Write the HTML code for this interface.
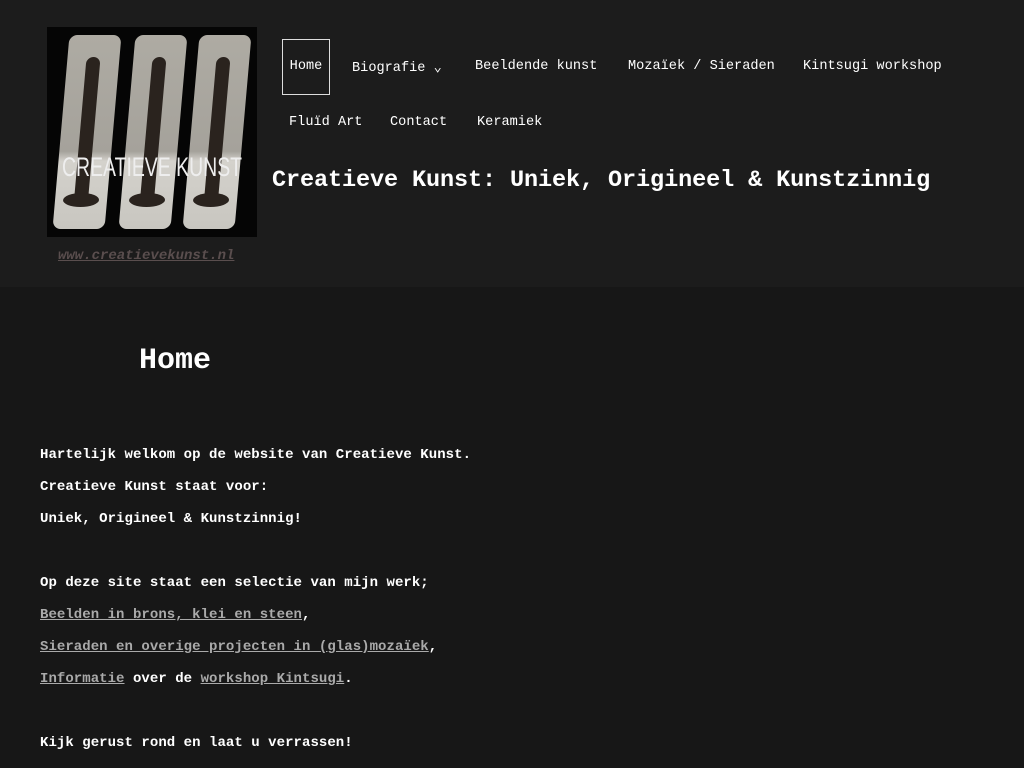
<!DOCTYPE html>
<html><head><meta charset="utf-8"><style>
body{margin:0;background:#171717;font-family:"Liberation Mono",monospace;color:#fff;width:1024px;height:768px;overflow:hidden;position:relative}
.hdr{position:absolute;left:0;top:0;width:1024px;height:287px;background:#1c1c1c}
.logo{position:absolute;left:47px;top:27px;width:210px;height:210px;background:#050505;overflow:hidden}
.p{position:absolute;top:8px;width:52px;height:194px;border-radius:8px;background:linear-gradient(#aeaba3 0%,#a5a29b 60%,#d4d2cc 65%,#c8c6c0 100%);transform:skewX(-5deg)}
.fig{position:absolute;left:19px;top:22px;width:14px;height:140px;background:#2a231e;border-radius:8px 8px 4px 4px}
.base{position:absolute;left:8px;top:158px;width:36px;height:14px;background:#2a231e;border-radius:50%}
.ck{position:absolute;left:-20px;top:125px;width:250px;text-align:center;white-space:nowrap;font-family:"Liberation Sans Narrow","Liberation Sans",sans-serif;font-size:27px;color:#eee;transform:scaleX(.72)}
.url{position:absolute;left:58px;top:248px;font-size:14px;font-weight:bold;font-style:italic;color:#5a4e4e;text-decoration:underline}
.nav a{position:absolute;font-size:13.6px;color:#fff;text-decoration:none}
.home{left:282px;top:39px;width:46px;height:54px;border:1px solid #ddd;line-height:54px;text-align:center}
.title{position:absolute;left:272px;top:167px;font-size:23.5px;font-weight:bold;letter-spacing:-.1px}
h1{position:absolute;left:139px;top:344px;margin:0;font-size:30px;font-weight:bold}
.c{position:absolute;left:40px;top:439px;font-size:14px;font-weight:bold;line-height:32px;letter-spacing:.05px}
.c a{color:#aaa;text-decoration:underline}
</style></head><body>
<div class="hdr"></div>
<div class="logo">
<div class="p" style="left:14px"><div class="fig"></div><div class="base"></div></div>
<div class="p" style="left:80px"><div class="fig"></div><div class="base"></div></div>
<div class="p" style="left:144px"><div class="fig"></div><div class="base"></div></div>
<div class="ck">CREATIEVE KUNST</div>
</div>
<div class="url">www.creatievekunst.nl</div>
<div class="nav">
<a class="home">Home</a>
<a style="left:352px;top:59px">Biografie ⌄</a>
<a style="left:475px;top:59px">Beeldende kunst</a>
<a style="left:628px;top:59px">Mozaïek / Sieraden</a>
<a style="left:803px;top:59px">Kintsugi workshop</a>
<a style="left:289px;top:115px">Fluïd Art</a>
<a style="left:390px;top:115px">Contact</a>
<a style="left:477px;top:115px">Keramiek</a>
</div>
<div class="title">Creatieve Kunst: Uniek, Origineel &amp; Kunstzinnig</div>
<h1>Home</h1>
<div class="c">
Hartelijk welkom op de website van Creatieve Kunst.<br>
Creatieve Kunst staat voor:<br>
Uniek, Origineel &amp; Kunstzinnig!<br><br>
Op deze site staat een selectie van mijn werk;<br>
<a>Beelden in brons, klei en steen</a>,<br>
<a>Sieraden en overige projecten in (glas)mozaïek</a>,<br>
<a>Informatie</a> over de <a>workshop Kintsugi</a>.<br><br>
Kijk gerust rond en laat u verrassen!
</div>
</body></html>
